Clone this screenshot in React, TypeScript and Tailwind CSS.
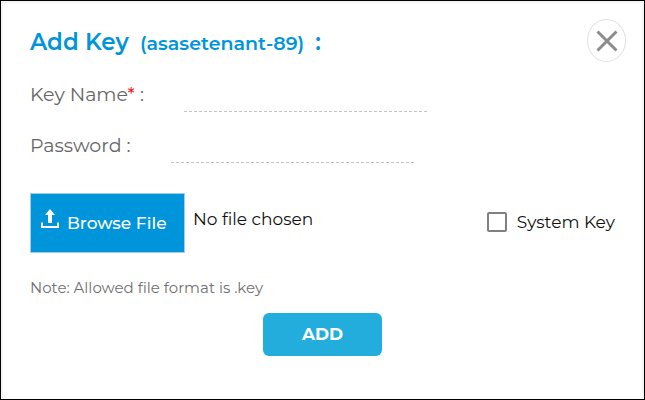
import { useRef, useState } from "react";

export default function App() {
	const [formData, setFormData] = useState({
		keyName: "",
		password: "",
		systemKey: false,
	});
	const [fileName, setFileName] = useState("");
	const fileInput = useRef<HTMLInputElement>(null);

	return (
		<div className="flex min-h-screen flex-col border border-black bg-white font-['Montserrat','Inter',sans-serif]">
			<div className="grow border-x-2 border-t-2 border-[#f5f3f5] px-[27px]">
				<header className="-mr-[11px] flex items-start justify-between pt-4">
					<h2 className="flex items-baseline pt-[7px] text-[23px] font-semibold leading-8 text-[#0095db]">
						Add Key
						<span className="ml-[11px] text-[19px]">(asasetenant-89)</span>
						<span className="ml-[11px]">:</span>
					</h2>
					<button
						type="button"
						aria-label="Close"
						className="flex h-[43px] w-[39px] items-center justify-center rounded-[50%] border border-[#e2e2e2]">
						<svg viewBox="0 0 22 22" className="size-[22px]" aria-hidden="true">
							<path d="M1.5 1.5l19 19M20.5 1.5l-19 19" stroke="#8c8c8c" strokeWidth="3" />
						</svg>
					</button>
				</header>

				<form onSubmit={(e) => e.preventDefault()}>
					<div className="mt-4 flex h-[34px] items-center gap-10">
						<label htmlFor="keyName" className="text-[19px] leading-8 text-[#666]">
							Key Name<span className="text-[#ff0000]">*</span> :
						</label>
						<input
							id="keyName"
							type="text"
							value={formData.keyName}
							onChange={(e) => setFormData({ ...formData, keyName: e.target.value })}
							className="h-full w-[243px] border-b border-dashed border-[#c4c4c4] outline-none"
						/>
					</div>

					<div className="mt-[17px] flex h-[34px] items-center gap-10">
						<label htmlFor="password" className="text-[19px] leading-8 text-[#666]">
							Password :
						</label>
						<input
							id="password"
							type="password"
							value={formData.password}
							onChange={(e) => setFormData({ ...formData, password: e.target.value })}
							className="h-full w-[243px] border-b border-dashed border-[#c4c4c4] outline-none"
						/>
					</div>

					{/* File picker and key type */}
					<div className="mt-[30px] flex items-center">
						<button
							type="button"
							onClick={() => fileInput.current?.click()}
							className="flex h-[60px] w-[155px] items-center gap-2 border border-[#9fcfe8] bg-[#0095db] pl-[10px] text-[17px] font-medium leading-6 text-white">
							<svg viewBox="0 0 18 20" className="mb-2 h-5 w-[18px]" fill="none" aria-hidden="true">
								<path d="M9 0l5 6h-3v8H7V6H4z" fill="#fff" />
								<path d="M1 13.5V18h16v-4.5" stroke="#fff" strokeWidth="2" />
							</svg>
							Browse File
						</button>
						<input
							ref={fileInput}
							type="file"
							accept=".key"
							aria-label="Key file"
							className="hidden"
							onChange={(e) => setFileName(e.target.files?.[0]?.name ?? "")}
						/>
						<span className="mb-2 ml-2 text-[17px] leading-6 text-[#111]">
							{fileName || "No file chosen"}
						</span>
						<label className="mb-[2px] ml-auto flex items-center gap-[10px] text-[17px] leading-6 text-[#111]">
							<input
								type="checkbox"
								checked={formData.systemKey}
								onChange={(e) => setFormData({ ...formData, systemKey: e.target.checked })}
								className="size-5 appearance-none rounded-[2px] border-2 border-[#808080] checked:bg-[#0095db]"
							/>
							System Key
						</label>
					</div>

					<p className="mt-[23px] text-[15px] leading-6 text-[#707070]">
						Note: Allowed file format is .key
					</p>

					<div className="mt-[13px] flex justify-center">
						<button
							type="submit"
							className="h-[43px] w-[119px] rounded-md bg-[#22addc] text-[17px] font-bold text-white">
							ADD
						</button>
					</div>
				</form>
			</div>
		</div>
	);
}
